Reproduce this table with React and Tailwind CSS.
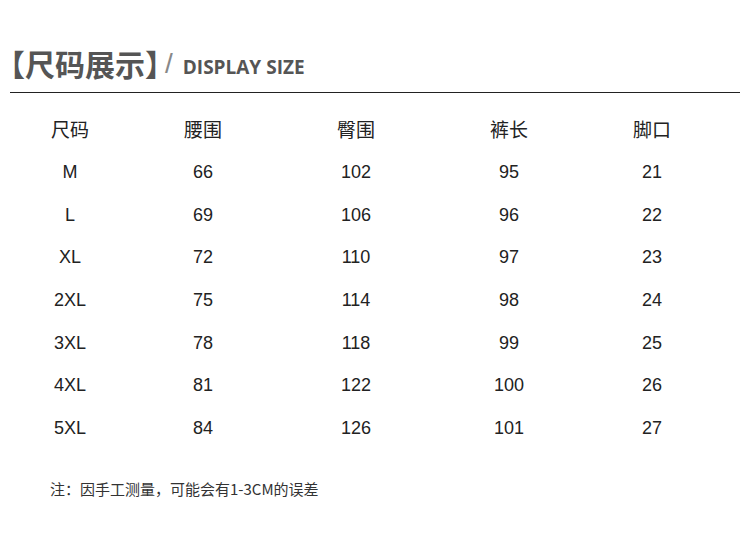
export default function App() {
  const rows = [
    ["M", "66", "102", "95", "21"],
    ["L", "69", "106", "96", "22"],
    ["XL", "72", "110", "97", "23"],
    ["2XL", "75", "114", "98", "24"],
    ["3XL", "78", "118", "99", "25"],
    ["4XL", "81", "122", "100", "26"],
    ["5XL", "84", "126", "101", "27"],
  ];
  const head = ["尺码", "腰围", "臀围", "裤长", "脚口"];
  const grid = "grid grid-cols-[120px_146px_160px_146px_140px] ml-[10px]";
  return (
    <div className="w-[750px] h-[543px] bg-white overflow-hidden" style={{ fontFamily: '"Liberation Sans", "Noto Sans CJK SC", sans-serif' }}>
      <div className="pt-[42px] px-[10px]">
        <div className="flex items-end h-[42px]">
          <span className='text-[30px] leading-[42px] font-bold text-[#555] [font-feature-settings:"halt"]' style={{ fontFamily: '"Noto Sans CJK SC", sans-serif' }}>【尺码展示】</span>
          <span className="text-[28px] leading-[40px] font-light text-[#888] ml-[5px]" style={{ fontFamily: '"Liberation Sans", sans-serif' }}>/</span>
          <span className="text-[19px] leading-[34px] font-bold text-[#555] ml-[10px]" style={{ fontFamily: '"Open Sans", sans-serif' }}>DISPLAY SIZE</span>
        </div>
        <div className="mt-[8px] h-px bg-[#222] w-[730px]"></div>
      </div>
      <div className={grid + " mt-[14px] h-[44px] items-center text-[19px] text-[#222]"} style={{ fontFamily: '"Noto Sans CJK SC", sans-serif' }}>
        {head.map((h) => (
          <div key={h} className="text-center">{h}</div>
        ))}
      </div>
      {rows.map((r) => (
        <div key={r[0]} className={grid + " h-[42.7px] items-center text-[18px] text-[#222]"}>
          {r.map((c, i) => (
            <div key={i} className="text-center">{c}</div>
          ))}
        </div>
      ))}
      <div className="ml-[50px] mt-[28px] text-[15px] text-[#333]" style={{ fontFamily: '"Noto Sans CJK SC", sans-serif' }}>
        注：因手工测量，可能会有1-3CM的误差
      </div>
    </div>
  );
}
